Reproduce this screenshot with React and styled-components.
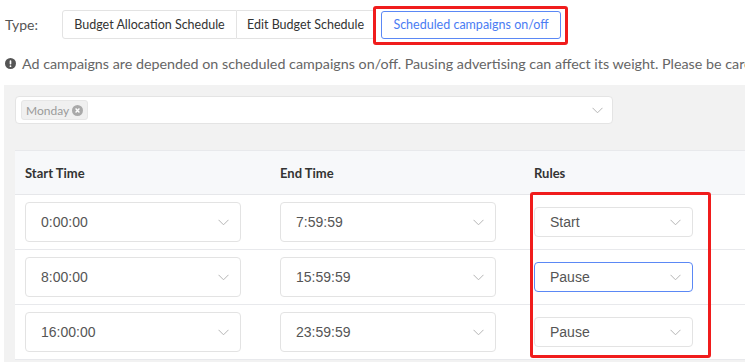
import React from "react";
import styled, { createGlobalStyle } from "styled-components";

const GlobalStyle = createGlobalStyle`
  html, body {
    margin: 0;
    padding: 0;
    background: #ffffff;
    overflow: hidden;
  }
  body {
    width: 745px;
    height: 362px;
    font-family: Lato, "Noto Sans", sans-serif;
    color: #333;
  }
`;

const Page = styled.div`
  width: 745px;
  height: 362px;
  overflow: hidden;
`;

const TypeRow = styled.div`
  display: flex;
  align-items: center;
  padding: 10px 0 0 5px;
  height: 29px;
`;

const TypeLabel = styled.span`
  font-size: 14px;
  color: #555;
  width: 57px;
`;

const ButtonGroup = styled.div`
  display: flex;
  align-items: center;
`;

const TypeButton = styled.button`
  position: relative;
  height: ${({ active }) => (active ? "28px" : "29px")};
  padding: 0;
  width: ${({ w }) => w}px;
  margin-left: ${({ active }) => (active ? "6px" : "0")};
  font-family: Lato, "Noto Sans", sans-serif;
  font-size: 12.5px;
  color: ${({ active }) => (active ? "#4a7cf3" : "#333")};
  background: #fff;
  border: 1px solid ${({ active }) => (active ? "#5b88f5" : "#e3e3e3")};
  border-left-width: ${({ first, active }) => (first || active ? "1px" : "0")};
  border-radius: ${({ first, last, active }) =>
    active ? "3px" : first ? "3px 0 0 3px" : last ? "0 3px 3px 0" : "0"};
  cursor: pointer;

  ${({ active }) =>
    active &&
    `
    &::after {
      content: "";
      position: absolute;
      left: -9px;
      right: -8px;
      top: -6px;
      bottom: -7px;
      border: 3px solid #f01c1c;
      border-radius: 3px;
      pointer-events: none;
    }
  `}
`;

const Notice = styled.div`
  display: flex;
  align-items: center;
  gap: 6px;
  padding: 15px 0 0 5px;
  height: 18px;
  font-size: 14.3px;
  color: #666;
  white-space: nowrap;

  svg {
    flex-shrink: 0;
  }
`;

const Panel = styled.div`
  margin: 13px 0 0 4px;
  background: #f2f2f2;
  padding: 11px 0 0 11px;
  height: 300px;
`;

const MultiSelect = styled.div`
  width: 591px;
  height: 26px;
  background: #fff;
  border: 1px solid #e4e4e4;
  border-radius: 4px;
  display: flex;
  align-items: center;
  justify-content: space-between;
  padding-left: 5px;
  box-sizing: content-box;
`;

const Tag = styled.span`
  display: inline-flex;
  align-items: center;
  gap: 3px;
  height: 18px;
  padding: 0 4px 0 4px;
  background: #f0f0f0;
  border: 1px solid #e6e6e6;
  border-radius: 3px;
  font-size: 12px;
  color: #9a9a9a;
`;

const ChevronBox = styled.span`
  display: flex;
  align-items: center;
  padding-right: ${({ pr }) => pr || 10}px;
`;

const Table = styled.div`
  position: relative;
  margin-top: 26px;
  width: 760px;
  background: #fff;
`;

const HeaderRow = styled.div`
  display: grid;
  grid-template-columns: 255px 254px 1fr;
  height: 45px;
  align-items: center;
  background: #f7f8fa;
  border-top: 1px solid #e8e9ec;
  border-bottom: 1px solid #e6e7ea;
  box-sizing: border-box;
`;

const HeadCell = styled.div`
  padding-left: 10px;
  font-size: 13px;
  font-weight: 700;
  color: #333;
`;

const Row = styled.div`
  display: grid;
  grid-template-columns: 255px 254px 1fr;
  height: 55px;
  align-items: center;
  border-bottom: 1px solid #e8e9ec;
  box-sizing: border-box;
`;

const Cell = styled.div`
  padding-left: 10px;
`;

const SelectBox = styled.div`
  width: ${({ w }) => w}px;
  height: ${({ h }) => h}px;
  box-sizing: border-box;
  border: 1px solid ${({ focused }) => (focused ? "#5b88f5" : "#e3e3e3")};
  border-radius: 4px;
  background: #fff;
  display: flex;
  align-items: center;
  justify-content: space-between;
  padding-left: 15px;
  font-family: "Liberation Sans", Arial, sans-serif;
  font-size: 14px;
  color: #555;
`;

const Highlight = styled.div`
  position: absolute;
  left: 515px;
  top: 42px;
  width: 181px;
  height: 166px;
  box-sizing: border-box;
  border: 3px solid #f01c1c;
  border-radius: 3px;
  pointer-events: none;
`;

const Chevron = () => (
  <svg width="11" height="7" viewBox="0 0 11 7" fill="none">
    <path d="M0.5 0.8 L5.5 5.8 L10.5 0.8" stroke="#b5b5b5" strokeWidth="1" />
  </svg>
);

const InfoIcon = () => (
  <svg width="11" height="11" viewBox="0 0 12 12">
    <circle cx="6" cy="6" r="6" fill="#555" />
    <rect x="5.1" y="2.4" width="1.8" height="4.6" rx="0.8" fill="#fff" />
    <circle cx="6" cy="8.9" r="0.95" fill="#fff" />
  </svg>
);

const CloseIcon = () => (
  <svg width="11" height="11" viewBox="0 0 12 12">
    <circle cx="6" cy="6" r="6" fill="#a9a9a9" />
    <path d="M3.9 3.9 L8.1 8.1 M8.1 3.9 L3.9 8.1" stroke="#fff" strokeWidth="1.5" />
  </svg>
);

const rows = [
  { start: "0:00:00", end: "7:59:59", rule: "Start" },
  { start: "8:00:00", end: "15:59:59", rule: "Pause", focused: true },
  { start: "16:00:00", end: "23:59:59", rule: "Pause" },
];

export default function App() {
  return (
    <Page>
      <GlobalStyle />
      <TypeRow>
        <TypeLabel>Type:</TypeLabel>
        <ButtonGroup>
          <TypeButton first w={175}>Budget Allocation Schedule</TypeButton>
          <TypeButton last w={138}>Edit Budget Schedule</TypeButton>
          <TypeButton active w={180}>Scheduled campaigns on/off</TypeButton>
        </ButtonGroup>
      </TypeRow>
      <Notice>
        <InfoIcon />
        Ad campaigns are depended on scheduled campaigns on/off. Pausing advertising can affect its weight. Please be careful.
      </Notice>
      <Panel>
        <MultiSelect>
          <Tag>
            Monday
            <CloseIcon />
          </Tag>
          <ChevronBox pr={9}>
            <Chevron />
          </ChevronBox>
        </MultiSelect>
        <Table>
          <HeaderRow>
            <HeadCell>Start Time</HeadCell>
            <HeadCell>End Time</HeadCell>
            <HeadCell>Rules</HeadCell>
          </HeaderRow>
          {rows.map((r) => (
            <Row key={r.start}>
              <Cell>
                <SelectBox w={216} h={40}>
                  {r.start}
                  <ChevronBox pr={11}>
                    <Chevron />
                  </ChevronBox>
                </SelectBox>
              </Cell>
              <Cell>
                <SelectBox w={216} h={40}>
                  {r.end}
                  <ChevronBox pr={11}>
                    <Chevron />
                  </ChevronBox>
                </SelectBox>
              </Cell>
              <Cell>
                <SelectBox w={159} h={30} focused={r.focused}>
                  {r.rule}
                  <ChevronBox pr={11}>
                    <Chevron />
                  </ChevronBox>
                </SelectBox>
              </Cell>
            </Row>
          ))}
          <Highlight />
        </Table>
      </Panel>
    </Page>
  );
}
